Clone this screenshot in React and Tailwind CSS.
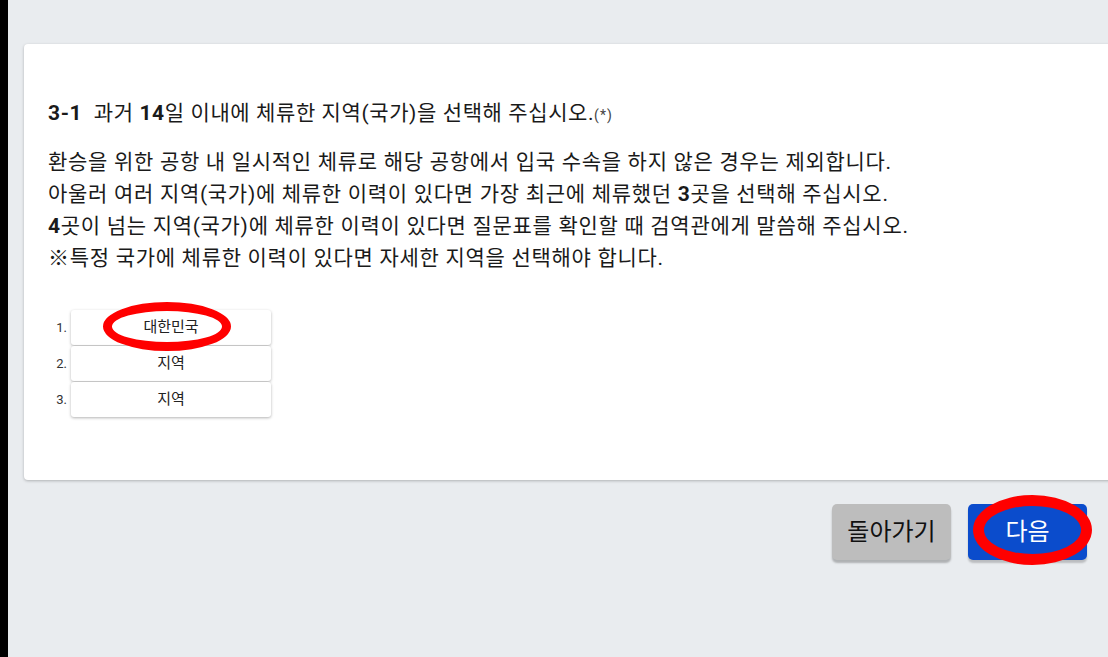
export default function App() {
  const font = { fontFamily: "Roboto, 'Noto Sans CJK KR', sans-serif" };
  const items = ["대한민국", "지역", "지역"];
  return (
    <div className="flex w-[1108px] h-[657px] overflow-hidden bg-[#e9ecef]" style={font}>
      <div className="w-[8px] shrink-0 bg-black" />
      <div className="flex flex-col flex-1 min-w-0">
        <div className="relative mt-[44px] ml-[16px] mr-[-20px] bg-white rounded-[4px] shadow-[0_1px_3px_rgba(0,0,0,0.25)] pt-[53px] pb-[63px] pl-[24px] text-[#1a1a1a]">
          <div className="text-[21px] leading-[32px] tracking-[0.6px] whitespace-nowrap">
            <span className="font-bold">3-1</span>
            <span>&nbsp; 과거 </span>
            <span className="font-bold">14</span>
            <span>일 이내에 체류한 지역(국가)을 선택해 주십시오.</span>
            <span className="text-[14px] tracking-[1px] text-[#444]">(*)</span>
          </div>
          <div className="mt-[15px] text-[21px] leading-[32px] tracking-[0.7px] whitespace-nowrap">
            <div>환승을 위한 공항 내 일시적인 체류로 해당 공항에서 입국 수속을 하지 않은 경우는 제외합니다.</div>
            <div>아울러 여러 지역(국가)에 체류한 이력이 있다면 가장 최근에 체류했던 <span className="font-bold">3</span>곳을 선택해 주십시오.</div>
            <div><span className="font-bold">4</span>곳이 넘는 지역(국가)에 체류한 이력이 있다면 질문표를 확인할 때 검역관에게 말씀해 주십시오.</div>
            <div>※특정 국가에 체류한 이력이 있다면 자세한 지역을 선택해야 합니다.</div>
          </div>
          <div className="mt-[36px] ml-[6px] flex flex-col gap-[1px]">
            {items.map((t, i) => (
              <div key={i} className="flex items-center">
                <div className="w-[17px] pr-[4px] text-right text-[13px] text-[#333]">{i + 1}.</div>
                <div className="w-[200px] h-[35px] flex items-center justify-center bg-white rounded-[3px] shadow-[0_1px_3px_rgba(0,0,0,0.3)] text-[15px] text-[#222]">
                  {t}
                </div>
              </div>
            ))}
          </div>
          <div className="absolute left-[79px] top-[258px] w-[128px] h-[49px] rounded-[50%] border-[9px] border-[#ff0000]" />
        </div>
        <div className="flex justify-end gap-[17px] mt-[24px] pr-[21px]">
          <button className="w-[119px] h-[56px] rounded-[5px] bg-[#bdbdbd] shadow-[0_3px_2px_rgba(0,0,0,0.25)] text-[24px] text-[#111]">
            돌아가기
          </button>
          <div className="relative">
            <button className="w-[119px] h-[56px] rounded-[5px] bg-[#0b4ccc] shadow-[0_3px_2px_rgba(0,0,0,0.2)] text-[24px] text-white">
              다음
            </button>
            <div className="absolute left-[5px] top-[-9px] w-[119px] h-[70px] rounded-[50%] border-[11px] border-[#ff0000]" />
          </div>
        </div>
      </div>
    </div>
  );
}
